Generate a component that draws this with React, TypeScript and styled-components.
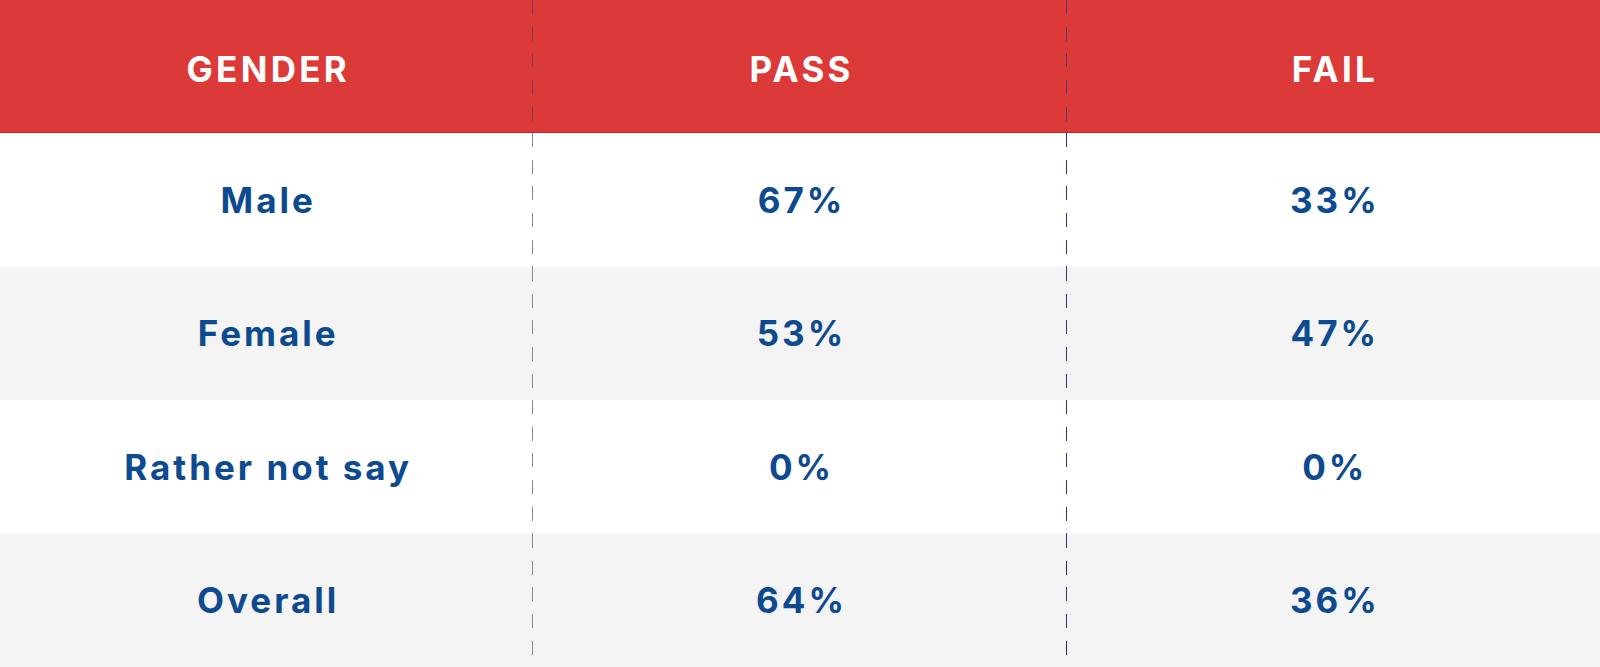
import React from "react";
import styled, { createGlobalStyle } from "styled-components";

const GlobalStyle = createGlobalStyle`
  html, body { margin: 0; padding: 0; background: #ffffff; }
  body { font-family: Inter, "Noto Sans", "Liberation Sans", sans-serif; }
`;

const Table = styled.div`
  width: 1600px;
  height: 667px;
  display: grid;
  grid-template-columns: repeat(3, 1fr);
  grid-template-rows: repeat(5, 1fr);
`;

const dash = (color: string) =>
  `repeating-linear-gradient(to bottom, ${color} 0px, ${color} 14px, transparent 14px, transparent 26.667px)`;

const Cell = styled.div<{ $head?: boolean; $shade?: boolean; $divider?: string }>`
  display: flex;
  align-items: center;
  justify-content: center;
  box-sizing: border-box;
  font-weight: 700;
  font-size: 35px;
  color: ${(p) => (p.$head ? "#ffffff" : "#0d4a8f")};
  background-color: ${(p) => (p.$head ? "#dc3a38" : p.$shade ? "#f4f4f4" : "#ffffff")};
  ${(p) => (p.$head ? "border-bottom: 1px solid #b72624; padding-top: 5px;" : "")}
  ${(p) =>
    p.$divider
      ? `background-image: ${dash(p.$divider)};
         background-repeat: no-repeat;
         background-size: 1px 100%;
         background-position: right top;`
      : ""}
`;

const Label = styled.span<{ $head?: boolean }>`
  letter-spacing: ${(p) => (p.$head ? "3.3px" : "3px")};
  margin-right: ${(p) => (p.$head ? "-3.3px" : "-3px")};
`;

const rows = [
  ["Male", "67%", "33%"],
  ["Female", "53%", "47%"],
  ["Rather not say", "0%", "0%"],
  ["Overall", "64%", "36%"],
];

const dividerColors = ["#7b8ba0", "#2a3570"];
const headDividerColors = ["#8a3a55", "#5a3a70"];

export default function App() {
  return (
    <>
      <GlobalStyle />
      <Table>
        {["GENDER", "PASS", "FAIL"].map((h, i) => (
          <Cell key={h} $head $divider={i < 2 ? headDividerColors[i] : undefined}>
            <Label $head>{h}</Label>
          </Cell>
        ))}
        {rows.map((r, ri) =>
          r.map((v, ci) => (
            <Cell
              key={`${ri}-${ci}`}
              $shade={ri % 2 === 1}
              $divider={ci < 2 ? dividerColors[ci] : undefined}
            >
              <Label>{v}</Label>
            </Cell>
          ))
        )}
      </Table>
    </>
  );
}
